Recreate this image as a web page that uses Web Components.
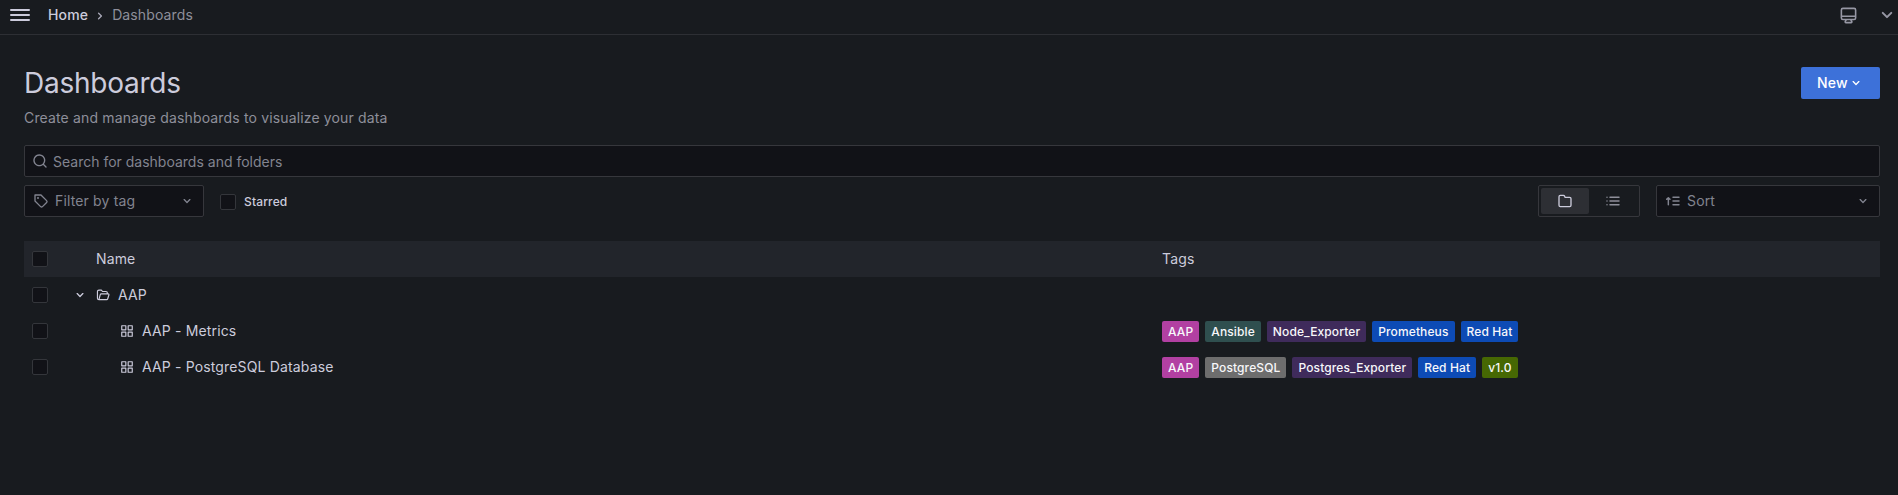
<!DOCTYPE html>
<html lang="en">
<head>
<meta charset="utf-8">
<title>Dashboards</title>
<style>
html,body{margin:0;height:100%;background:#181b1f;overflow:hidden}
body{font:400 14px/22px Inter,"Liberation Sans",sans-serif;letter-spacing:.15px;color:#ccccdc}
</style>
</head>
<body>
<dash-app></dash-app>
<script>
const ICONS={
bars:'<path d="M3,8H21a1,1,0,0,0,0-2H3A1,1,0,0,0,3,8Zm18,8H3a1,1,0,0,0,0,2H21a1,1,0,0,0,0-2Zm0-5H3a1,1,0,0,0,0,2H21a1,1,0,0,0,0-2Z"/>',
right:'<path d="M14.83,11.29,10.59,7.05a1,1,0,0,0-1.42,0,1,1,0,0,0,0,1.41L12.71,12,9.17,15.54a1,1,0,0,0,0,1.41,1,1,0,0,0,.71.29,1,1,0,0,0,.71-.29l4.24-4.24A1,1,0,0,0,14.83,11.29Z"/>',
down:'<path d="M17,9.17a1,1,0,0,0-1.41,0L12,12.71,8.46,9.17a1,1,0,0,0-1.41,0,1,1,0,0,0,0,1.42l4.24,4.24a1,1,0,0,0,1.42,0L17,10.59A1,1,0,0,0,17,9.17Z"/>',
search:'<path d="M21.71,20.29,18,16.61A9,9,0,1,0,16.61,18l3.68,3.68a1,1,0,0,0,1.42,0A1,1,0,0,0,21.71,20.29ZM11,18a7,7,0,1,1,7-7A7,7,0,0,1,11,18Z"/>',
folder:'<path d="M19,5.5H12.72l-.32-1a3,3,0,0,0-2.84-2H5a3,3,0,0,0-3,3v13a3,3,0,0,0,3,3H19a3,3,0,0,0,3-3V8.5A3,3,0,0,0,19,5.5Zm1,13a1,1,0,0,1-1,1H5a1,1,0,0,1-1-1V5.5a1,1,0,0,1,1-1H9.56a1,1,0,0,1,.95.68l.54,1.64A1,1,0,0,0,12,7.5h7a1,1,0,0,1,1,1Z"/>',
open:'<path d="M5 20a2.500 2.500 0 0 1-2.500-2.500V6A2.500 2.500 0 0 1 5 3.500h4.200l2 2.500H17a2.500 2.500 0 0 1 2.500 2.500V10M5 20h13.200a2 2 0 0 0 1.900-1.500l2-6.500a1.500 1.500 0 0 0-1.400-2H9.200a2 2 0 0 0-1.900 1.500L5 20" fill="none" stroke="currentColor" stroke-width="2" stroke-linejoin="round"/>',
apps:'<path d="M10,13H3a1,1,0,0,0-1,1v7a1,1,0,0,0,1,1h7a1,1,0,0,0,1-1V14A1,1,0,0,0,10,13ZM9,20H4V15H9ZM21,2H14a1,1,0,0,0-1,1v7a1,1,0,0,0,1,1h7a1,1,0,0,0,1-1V3A1,1,0,0,0,21,2ZM20,9H15V4h5Zm1,4H14a1,1,0,0,0-1,1v7a1,1,0,0,0,1,1h7a1,1,0,0,0,1-1V14A1,1,0,0,0,21,13Zm-1,7H15V15h5ZM10,2H3A1,1,0,0,0,2,3v7a1,1,0,0,0,1,1h7a1,1,0,0,0,1-1V3A1,1,0,0,0,10,2ZM9,9H4V4H9Z"/>',
list:'<g fill="none" stroke="currentColor" stroke-width="2.200" stroke-linecap="round"><path d="M3 6.500H3.010M3 12H3.010M3 17.500H3.010M7.500 6.500H21M7.500 12H21M7.500 17.500H21"/></g>',
tag:'<path d="M7.5,6A1.5,1.5,0,1,0,9,7.5,1.5,1.5,0,0,0,7.5,6Zm13.62,4.71L12.71,2.29A1,1,0,0,0,12,2H3A1,1,0,0,0,2,3v9a1,1,0,0,0,.29.71l8.42,8.41a3,3,0,0,0,4.24,0L21.12,15a3,3,0,0,0,0-4.24Zm-1.41,2.82h0l-6.18,6.17a1,1,0,0,1-1.41,0L4,11.59V4h7.59l8.12,8.12a1,1,0,0,1,.29.71A1,1,0,0,1,19.71,13.53Z"/>',
sort:'<path d="M5 17.500V7.500M2.500 9.500L5 7L7.500 9.500M12 6.500H21M12 12H21M12 17.500H21" fill="none" stroke="currentColor" stroke-width="2.200" stroke-linecap="round" stroke-linejoin="round"/>',
monitor:'<path d="M19,2H5A3,3,0,0,0,2,5V15a3,3,0,0,0,3,3H7.640l-.58,1a2,2,0,0,0,0,2,2,2,0,0,0,1.750,1h6.460A2,2,0,0,0,17,21a2,2,0,0,0,0-2l-.59-1H19a3,3,0,0,0,3-3V5A3,3,0,0,0,19,2ZM8.770,20,10,18H14l1.200,2ZM20,15a1,1,0,0,1-1,1H5a1,1,0,0,1-1-1V14H20Zm0-3H4V5A1,1,0,0,1,5,4H19a1,1,0,0,1,1,1Z"/>'
};
const define=(name,html)=>customElements.define(name,class extends HTMLElement{
  constructor(){super();this.attachShadow({mode:'open'}).innerHTML=html;}
});

customElements.define('ui-icon',class extends HTMLElement{
  connectedCallback(){
    const s=this.getAttribute('size')||16;
    (this.shadowRoot||this.attachShadow({mode:'open'})).innerHTML=
    `<style>:host{display:inline-flex;flex:none;width:${s}px;height:${s}px}svg{display:block;fill:currentColor}</style><svg viewBox="0 0 24 24" width="${s}" height="${s}">${ICONS[this.getAttribute('name')]}</svg>`;
  }
});

define('ui-checkbox',`<style>
:host{display:inline-flex;align-items:center;gap:8px;font-size:12px;font-weight:500;line-height:16px}
i{box-sizing:border-box;width:16px;height:16px;border:1px solid #34363b;border-radius:2px;background:#111217}
</style><i></i><slot></slot>`);

customElements.define('ui-tag',class extends HTMLElement{
  constructor(){super();this.attachShadow({mode:'open'}).innerHTML=`<style>
:host{display:block;height:18px;padding:3px 6px 0;border-radius:2px;font-size:12px;font-weight:500;line-height:15px;color:#f7f7fa;letter-spacing:.12px;white-space:nowrap;background:var(--tag)}
</style><slot></slot>`;}
  connectedCallback(){this.style.setProperty('--tag',this.getAttribute('color'));}
});

define('ui-field',`<style>
:host{display:flex;box-sizing:border-box;height:32px;align-items:center;border:1px solid #36373c;border-radius:2px;background:#111217;color:#828490;padding:0 8px}
.text{flex:1;white-space:nowrap}
</style><slot name="prefix"></slot><span class="text"><slot></slot></span><slot name="suffix"></slot>`);

define('view-switch',`<style>
:host{display:flex;box-sizing:border-box;width:102px;height:32px;padding:2px;border:1px solid #36373c;border-radius:2px;color:#8e8f9a}
span{display:flex;flex:1;align-items:center;justify-content:center;border-radius:2px}
.on{background:#2d2f34;color:#ccccdc}
</style><span class="on"><ui-icon name="folder"></ui-icon></span><span><ui-icon name="list"></ui-icon></span>`);

define('top-bar',`<style>
:host{display:flex;box-sizing:border-box;height:35px;padding:0 0 4px 8px;align-items:center;border-bottom:1px solid #2d2f34}
.home{margin-left:16px;font-weight:500}
.sep{margin:1px 4px 0 4px;color:#a9a9b8}
.here{color:#8e8f9a;letter-spacing:.12px}
.right{margin-left:auto;display:flex;align-items:center;gap:17px;color:#9697a4}
.right ui-icon:last-child{margin-right:-1px}
</style>
<ui-icon name="bars" size="24"></ui-icon><span class="home">Home</span><ui-icon class="sep" name="right"></ui-icon><span class="here">Dashboards</span>
<div class="right"><ui-icon name="monitor" size="19"></ui-icon><ui-icon name="down" size="24"></ui-icon></div>`);

define('page-header',`<style>
:host{display:flex;justify-content:space-between;align-items:flex-start}
h1{margin:0;font-size:28px;font-weight:400;line-height:32px;letter-spacing:-.25px}
p{margin:8px 0 0;color:#8e8f9a}
button{display:flex;align-items:center;box-sizing:border-box;height:32px;width:79px;padding:0 16px;border:0;border-radius:2px;background:#3d71d9;color:#fff;font:500 14px/22px Inter,sans-serif;letter-spacing:.15px}
</style><div><h1>Dashboards</h1><p>Create and manage dashboards to visualize your data</p></div>
<button>New<ui-icon name="down"></ui-icon></button>`);

customElements.define('table-row',class extends HTMLElement{
  constructor(){super();this.attachShadow({mode:'open'}).innerHTML=`<style>
:host{display:grid;grid-template-columns:40px 1098px 1fr;align-items:center;height:36px;padding-left:8px}
:host([head]){background:#22252b}
.name{display:flex;align-items:center;padding-left:var(--indent,32px);white-space:nowrap}
.tags{display:flex;gap:6px;margin-left:-8px}
</style><ui-checkbox></ui-checkbox><div class="name"><slot></slot></div><div class="tags"><slot name="tags"></slot></div>`;}
});

define('dash-app',`<style>
:host{display:block}
main{padding:32px 18px 0 24px}
.search{margin-top:16px;padding:1px 7px 0;letter-spacing:0}
.filters{display:flex;align-items:center;margin:8px 0 24px}
.tagf{width:180px;margin-right:16px}
.sort{width:224px;margin-left:16px}
view-switch{margin-left:auto}
.p{margin:-1px 5px 0 0}
.starred{margin-top:2px}
</style>
<top-bar></top-bar>
<main>
<page-header></page-header>
<ui-field class="search"><ui-icon class="p" slot="prefix" name="search"></ui-icon>Search for dashboards and folders</ui-field>
<div class="filters">
<ui-field class="tagf"><ui-icon slot="prefix" name="tag" style="margin-right:6px"></ui-icon>Filter by tag<ui-icon slot="suffix" name="down"></ui-icon></ui-field>
<ui-checkbox class="starred">Starred</ui-checkbox>
<view-switch></view-switch>
<ui-field class="sort"><ui-icon slot="prefix" name="sort" style="margin-right:6px"></ui-icon>Sort<ui-icon slot="suffix" name="down"></ui-icon></ui-field>
</div>
<table-row head style="--indent:24px">Name<span slot="tags">Tags</span></table-row>
<table-row style="--indent:0px"><ui-icon name="down" style="margin-right:8px"></ui-icon><ui-icon name="open" size="14" style="margin-right:8px"></ui-icon>AAP</table-row>
<table-row style="--indent:48px"><ui-icon name="apps" size="14" style="margin-right:8px"></ui-icon>AAP - Metrics
<ui-tag slot="tags" color="#b240a2">AAP</ui-tag><ui-tag slot="tags" color="#2f4f4f">Ansible</ui-tag><ui-tag slot="tags" color="#3f2b5b">Node_Exporter</ui-tag><ui-tag slot="tags" color="#0d4bb5">Prometheus</ui-tag><ui-tag slot="tags" color="#0d4bb5">Red Hat</ui-tag></table-row>
<table-row style="--indent:48px"><ui-icon name="apps" size="14" style="margin-right:8px"></ui-icon>AAP - PostgreSQL Database
<ui-tag slot="tags" color="#b240a2">AAP</ui-tag><ui-tag slot="tags" color="#6d6d6d">PostgreSQL</ui-tag><ui-tag slot="tags" color="#3f2b5b">Postgres_Exporter</ui-tag><ui-tag slot="tags" color="#0d4bb5">Red Hat</ui-tag><ui-tag slot="tags" color="#466803">v1.0</ui-tag></table-row>
</main>`);
</script>
</body>
</html>
